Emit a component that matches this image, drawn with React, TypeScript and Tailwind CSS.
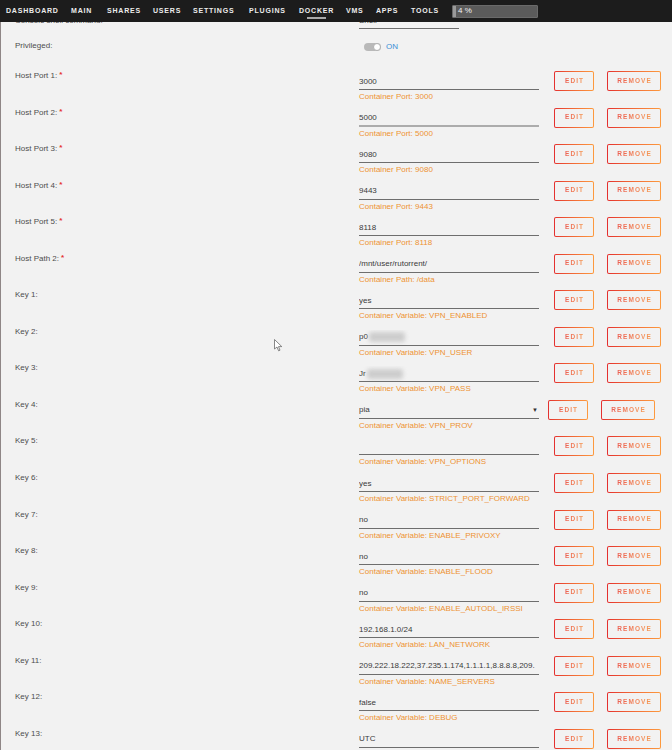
import React from 'react'

type Row = {
  label: string
  req?: boolean
  value: string
  help: string
  blur?: boolean
  select?: boolean
  soft?: boolean
}

const nav = [
  { name: 'DASHBOARD', w: 'w-[65px]' },
  { name: 'MAIN', w: 'w-[36px]' },
  { name: 'SHARES', w: 'w-[46px]' },
  { name: 'USERS', w: 'w-[40px]' },
  { name: 'SETTINGS', w: 'w-[56px]' },
  { name: 'PLUGINS', w: 'w-[50px]' },
  { name: 'DOCKER', w: 'w-[47px]', active: true },
  { name: 'VMS', w: 'w-[30px]' },
  { name: 'APPS', w: 'w-[35px]' },
  { name: 'TOOLS', w: 'w-[41px]' },
]

const rows: Row[] = [
  { label: 'Host Port 1:', req: true, value: '3000', help: 'Container Port: 3000' },
  { label: 'Host Port 2:', req: true, value: '5000', help: 'Container Port: 5000', soft: true },
  { label: 'Host Port 3:', req: true, value: '9080', help: 'Container Port: 9080' },
  { label: 'Host Port 4:', req: true, value: '9443', help: 'Container Port: 9443' },
  { label: 'Host Port 5:', req: true, value: '8118', help: 'Container Port: 8118' },
  { label: 'Host Path 2:', req: true, value: '/mnt/user/rutorrent/', help: 'Container Path: /data' },
  { label: 'Key 1:', value: 'yes', help: 'Container Variable: VPN_ENABLED' },
  { label: 'Key 2:', value: 'p0', help: 'Container Variable: VPN_USER', blur: true },
  { label: 'Key 3:', value: 'Jr', help: 'Container Variable: VPN_PASS', blur: true },
  { label: 'Key 4:', value: 'pia', help: 'Container Variable: VPN_PROV', select: true },
  { label: 'Key 5:', value: '', help: 'Container Variable: VPN_OPTIONS' },
  { label: 'Key 6:', value: 'yes', help: 'Container Variable: STRICT_PORT_FORWARD' },
  { label: 'Key 7:', value: 'no', help: 'Container Variable: ENABLE_PRIVOXY' },
  { label: 'Key 8:', value: 'no', help: 'Container Variable: ENABLE_FLOOD' },
  { label: 'Key 9:', value: 'no', help: 'Container Variable: ENABLE_AUTODL_IRSSI' },
  { label: 'Key 10:', value: '192.168.1.0/24', help: 'Container Variable: LAN_NETWORK' },
  { label: 'Key 11:', value: '209.222.18.222,37.235.1.174,1.1.1.1,8.8.8.8,209.', help: 'Container Variable: NAME_SERVERS' },
  { label: 'Key 12:', value: 'false', help: 'Container Variable: DEBUG' },
  { label: 'Key 13:', value: 'UTC', help: '' },
]

function Btn({ w, text }: { w: string; text: string }) {
  return (
    <div className={`${w} h-[20px] rounded-[2px] bg-linear-to-r from-[#e42f2f] to-[#fd9a3e] p-[1px]`}>
      <div className="flex h-full w-full items-center justify-center rounded-[1px] bg-[#f2f2f2] pl-[1.2px]">
        <span className="bg-linear-to-r from-[#ec5f52] to-[#f59a55] bg-clip-text text-[6.5px] font-bold leading-none tracking-[1.1px] text-transparent">
          {text}
        </span>
      </div>
    </div>
  )
}

function Label({ text, req }: { text: string; req?: boolean }) {
  return (
    <div className="w-[358px] shrink-0 pl-[14px] pt-[3px] text-[8px] leading-[10px] text-[#4d4d4d]">
      {text}
      {req && <span className="relative -top-[1px] ml-[2px] text-[8px] font-bold leading-[8px] text-[#e53030]">*</span>}
    </div>
  )
}

function FieldRow({ row }: { row: Row }) {
  return (
    <div className="flex h-[36.56px] shrink-0 items-start">
      <Label text={row.label} req={row.req} />
      <div className="w-[180px] shrink-0 pt-[6px]">
        <div
          className={`relative flex h-[16px] items-center overflow-hidden whitespace-nowrap text-[8px] text-[#3a3a3a] ${
            row.soft ? 'border-b-2 border-[#acacac]' : 'border-b border-[#6e6e6e]'
          }`}
        >
          <span>{row.value}</span>
          {row.blur && <span className="ml-[1px] h-[10px] w-[36px] rounded-[3px] bg-[#cdcdcd] blur-[2px]" />}
          {row.select && <span className="absolute right-[1px] text-[6px] text-[#333]">▼</span>}
        </div>
        {row.help && <div className="whitespace-nowrap text-[8px] leading-[14px] text-[#ee9233]">{row.help}</div>}
      </div>
      <div className={`${row.select ? 'ml-[9px]' : 'ml-[15px]'} mt-[3px] flex gap-[13px]`}>
        <Btn w="w-[40px]" text="EDIT" />
        <Btn w="w-[54px]" text="REMOVE" />
      </div>
    </div>
  )
}

export default function App() {
  return (
    <div className="relative flex h-[750px] w-[672px] flex-col overflow-hidden bg-[#f2f2f2] font-['Liberation_Sans',Arial,sans-serif]">
      <header className="relative z-10 flex h-[22px] shrink-0 items-center bg-[#1c1c1c] pl-[6px]">
        {nav.map((n) => (
          <div key={n.name} className={`${n.w} relative flex h-full shrink-0 items-center`}>
            <span className="text-[7px] font-bold tracking-[0.8px] text-[#ececec]">{n.name}</span>
            {n.active && <span className="absolute left-[8px] top-[17px] h-[2px] w-[19px] bg-[#a9a9a9]" />}
          </div>
        ))}
        <div className="relative flex h-[13px] w-[86px] items-center rounded-[1px] border border-[#6a6a6a] bg-[#5b5b5b]">
          <span className="h-full w-[3px] bg-[#9a9a9a]" />
          <span className="ml-[2px] text-[8px] text-[#f2f2f2]">4 %</span>
        </div>
      </header>

      <main className="flex flex-1 flex-col overflow-hidden border-l border-[#8f8686]">
        <div className="-mt-[9px] flex h-[25px] shrink-0 items-start">
          <Label text="Console shell command:" />
          <div className="flex h-[16px] w-[100px] items-center border-b border-[#6e6e6e] text-[8px] text-[#3a3a3a]">
            Shell
          </div>
        </div>

        <div className="flex h-[30px] shrink-0 items-start">
          <Label text="Privileged:" />
          <div className="ml-[5px] mt-[5px] flex items-center gap-[5px]">
            <div className="flex h-[8px] w-[17px] justify-end rounded-full bg-[#b9b9b9]">
              <span className="h-[8px] w-[8px] rounded-full border border-[#b0b0b0] bg-white" />
            </div>
            <span className="text-[8px] leading-[8px] text-[#3b8fd6]">ON</span>
          </div>
        </div>

        {rows.map((r) => (
          <FieldRow key={r.label} row={r} />
        ))}
      </main>

      <svg className="absolute left-[274px] top-[339px]" width="9" height="13" viewBox="0 0 9 13">
        <path d="M0.5 0.5 L0.5 10 L3 8 L4.6 11.8 L6 11.2 L4.5 7.6 L7.8 7.6 Z" fill="#fff" stroke="#6a6a6a" strokeWidth="0.8" />
      </svg>
    </div>
  )
}
